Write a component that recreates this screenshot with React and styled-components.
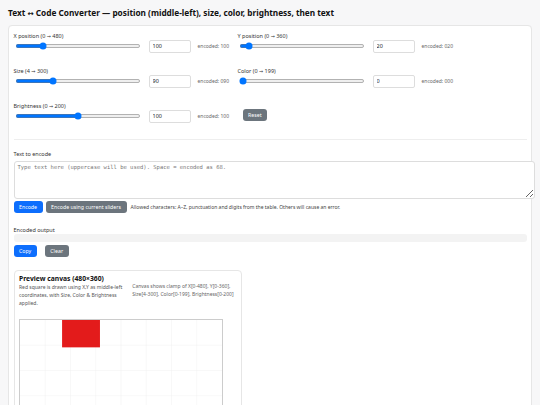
import React from 'react';
import styled, { createGlobalStyle } from 'styled-components';

const Global = createGlobalStyle`
  html { zoom: 0.5; }
  body {
    margin: 0;
    background: #f7f7f8;
    font-family: "Noto Sans", "Open Sans", sans-serif;
    color: #222;
  }
`;

const Page = styled.div`
  padding: 16px;
`;

const Title = styled.h1`
  font-size: 16.5px;
  line-height: 20px;
  margin: 0 0 12px;
  font-weight: 700;
  color: #111;
`;

const Arrow = styled.span`
  font-family: "DejaVu Sans", sans-serif;
  font-size: 0.9em;
`;

const Card = styled.div`
  background: #fff;
  border: 1px solid #e6e6e6;
  border-radius: 8px;
  padding: 11px 9px 40px;
  box-shadow: 0 1px 2px rgba(0, 0, 0, 0.03);
`;

const Controls = styled.div`
  display: grid;
  grid-template-columns: 448px 1fr;
  row-gap: 28px;
`;

const Field = styled.div`
  display: flex;
  flex-direction: column;
`;

const Label = styled.label`
  font-size: 11px;
  line-height: 16px;
  color: #333;
`;

const ControlRow = styled.div`
  display: flex;
  align-items: center;
  gap: 14px;
  height: 26px;
`;

const Range = styled.input.attrs({ type: 'range' })`
  width: 252px;
  margin: 2px;
`;

const NumInput = styled.input`
  width: 84px;
  height: 26px;
  box-sizing: border-box;
  border: 1px solid #ddd;
  border-radius: 4px;
  padding: 0 6px;
  font: 11px "Noto Sans", sans-serif;
  color: #222;
`;

const Encoded = styled.span`
  font-size: 10px;
  color: #666;
`;

const Button = styled.button`
  height: 24px;
  padding: 0 11px;
  border: none;
  border-radius: 6px;
  font: 10.5px "Noto Sans", sans-serif;
  color: #fff;
  background: ${(p) => (p.$variant === 'primary' ? '#0d6efd' : '#6c757d')};
  cursor: pointer;
`;

const ResetButton = styled(Button)`
  align-self: end;
  justify-self: start;
  margin: 0 0 4px 10px;
`;

const Divider = styled.hr`
  border: none;
  border-top: 1px solid #eee;
  margin: 33px 0 0;
`;

const Section = styled.div`
  margin-top: ${(p) => p.$top || 0}px;
  display: flex;
  flex-direction: column;
`;

const TextArea = styled.textarea`
  margin-top: 6px;
  width: 100%;
  height: 60px;
  padding: 4px 6px 8px;
  border: 1px solid #ddd;
  border-radius: 6px;
  font: 11px "DejaVu Sans Mono", "Liberation Mono", monospace;
  color: #222;
  &::placeholder { color: #777; }
`;

const ButtonRow = styled.div`
  display: flex;
  align-items: center;
  gap: ${(p) => p.$gap || 6}px;
  margin-top: 5px;
`;

const Hint = styled.span`
  font-size: 10px;
  color: #444;
  margin-left: 2px;
`;

const Output = styled.div`
  background: #f3f3f3;
  border-radius: 6px;
  height: 16px;
`;

const Preview = styled.div`
  margin-top: 26px;
  width: 456px;
  box-sizing: border-box;
  border: 1px solid #e6e6e6;
  border-radius: 8px;
  padding: 9px 10px 10px 9px;
`;

const PreviewTitle = styled.h3`
  margin: 0;
  font-size: 13.5px;
  line-height: 16px;
  font-weight: 700;
  color: #111;
`;

const PreviewInfo = styled.div`
  display: flex;
  gap: 16px;
`;

const Desc = styled.p`
  margin: 0;
  width: ${(p) => (p.$muted ? 210 : 214)}px;
  font-size: 10px;
  line-height: 16px;
  color: ${(p) => (p.$muted ? '#666' : '#555')};
  position: relative;
  top: ${(p) => (p.$muted ? -2 : 0)}px;
`;

const CanvasFrame = styled.div`
  margin-top: 23px;
  width: 404px;
  height: 303px;
  border: 2px solid #ccc;
  background: #fff;
`;

const sliders = [
  { name: 'X position', range: ['0', '480'], max: 480, value: 100, code: '100' },
  { name: 'Y position', range: ['0', '360'], max: 360, value: 20, code: '020' },
  { name: 'Size', range: ['4', '300'], min: 4, max: 300, value: 90, code: '090' },
  { name: 'Color', range: ['0', '199'], max: 199, value: 0, code: '000' },
  { name: 'Brightness', range: ['0', '200'], max: 200, value: 100, code: '100' },
];

function SliderField({ s }) {
  return (
    <Field>
      <Label>
        {s.name} ({s.range[0]} <Arrow>→</Arrow> {s.range[1]})
      </Label>
      <ControlRow>
        <Range min={s.min || 0} max={s.max} defaultValue={s.value} />
        <NumInput type="text" defaultValue={s.value} />
        <Encoded>encoded: {s.code}</Encoded>
      </ControlRow>
    </Field>
  );
}

function PreviewCanvas() {
  const lines = [];
  for (let x = 60; x < 480; x += 60) lines.push(<line key={'v' + x} x1={x} y1={0} x2={x} y2={360} />);
  for (let y = 60; y < 360; y += 60) lines.push(<line key={'h' + y} x1={0} y1={y} x2={480} y2={y} />);
  return (
    <CanvasFrame>
      <svg width="404" height="303" viewBox="0 0 480 360" style={{ display: 'block' }}>
        <g stroke="#eeeeee" strokeWidth="1">{lines}</g>
        <rect x="100" y="-25" width="90" height="90" fill="#e31b1b" />
      </svg>
    </CanvasFrame>
  );
}

export default function App() {
  return (
    <>
      <Global />
      <Page>
        <Title>
          Text <Arrow>↔</Arrow> Code Converter — position (middle-left), size, color, brightness, then text
        </Title>
        <Card>
          <Controls>
            <SliderField s={sliders[0]} />
            <SliderField s={sliders[1]} />
            <SliderField s={sliders[2]} />
            <SliderField s={sliders[3]} />
            <SliderField s={sliders[4]} />
            <ResetButton>Reset</ResetButton>
          </Controls>
          <Divider />
          <Section $top={19}>
            <Label>Text to encode</Label>
            <TextArea placeholder="Type text here (uppercase will be used). Space = encoded as 68." />
            <ButtonRow>
              <Button $variant="primary">Encode</Button>
              <Button>Encode using current sliders</Button>
              <Hint>Allowed characters: A–Z, punctuation and digits from the table. Others will cause an error.</Hint>
            </ButtonRow>
          </Section>
          <Section $top={26}>
            <Label>Encoded output</Label>
            <Output />
            <ButtonRow $gap={16}>
              <Button $variant="primary">Copy</Button>
              <Button>Clear</Button>
            </ButtonRow>
          </Section>
          <Preview>
            <PreviewTitle>Preview canvas (480×360)</PreviewTitle>
            <PreviewInfo>
              <Desc>Red square is drawn using X,Y as middle-left coordinates, with Size, Color &amp; Brightness applied.</Desc>
              <Desc $muted>Canvas shows clamp of X[0-480], Y[0-360], Size[4-300], Color[0-199], Brightness[0-200]</Desc>
            </PreviewInfo>
            <PreviewCanvas />
          </Preview>
        </Card>
      </Page>
    </>
  );
}
